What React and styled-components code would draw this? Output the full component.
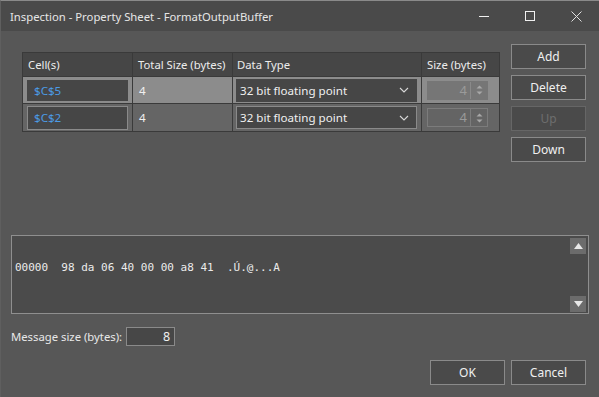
import React from 'react';
import styled, { createGlobalStyle } from 'styled-components';

const GlobalStyle = createGlobalStyle`
  html, body {
    margin: 0;
    padding: 0;
    background: #555555;
  }
  * {
    box-sizing: border-box;
  }
`;

const Window = styled.div`
  width: 599px;
  height: 397px;
  background: #575757;
  border-top: 1px solid #8a8a8a;
  border-left: 1px solid #5f5f5f;
  font-family: 'Segoe UI', 'Noto Sans', sans-serif;
  font-size: 11.3px;
  color: #e8e8e8;
  overflow: hidden;
`;

const TitleBar = styled.div`
  height: 30px;
  background: #4a4a4a;
  display: flex;
  align-items: center;
  padding-left: 9px;
`;

const Title = styled.div`
  flex: 1;
  color: #e6e6e6;
  white-space: nowrap;
`;

const Control = styled.div`
  width: 46px;
  height: 30px;
  display: flex;
  align-items: center;
  justify-content: center;
`;

const Body = styled.div`
  padding: 13px 10px 0 10px;
  display: flex;
  flex-direction: column;
`;

const TopRow = styled.div`
  display: flex;
  justify-content: space-between;
  height: 118px;
`;

const Table = styled.div`
  margin-top: 8px;
  margin-left: 11px;
  display: grid;
  grid-template-columns: 110px 100px 189px 78px;
  grid-template-rows: 24px 27px 28px;
  border-top: 1px solid #3a3a3a;
  border-left: 1px solid #3a3a3a;
  align-self: flex-start;
`;

const HeadCell = styled.div`
  background: #464646;
  border-right: 1px solid #3a3a3a;
  border-bottom: 1px solid #3a3a3a;
  padding-left: ${({ pad }) => pad || 5}px;
  display: flex;
  align-items: center;
  color: #ececec;
  white-space: nowrap;
`;

const Cell = styled.div`
  background: ${({ selected }) => (selected ? '#8c8c8c' : '#656565')};
  border-right: 1px solid #3a3a3a;
  border-bottom: 1px solid #3a3a3a;
  display: flex;
  align-items: center;
  padding: 0 ${({ padR }) => padR || 4}px 0 ${({ padL }) => padL || 4}px;
  color: #f0f0f0;
  font-size: 11.6px;
`;

const TextBox = styled.div`
  flex: 1;
  height: ${({ h }) => h || 21}px;
  background: #464646;
  border: 1px solid ${({ focused }) => (focused ? '#8a8a8a' : '#464646')};
  color: ${({ blue }) => (blue ? '#4b9be6' : '#f0f0f0')};
  display: flex;
  align-items: center;
  padding-left: 6px;
`;

const Select = styled(TextBox)`
  padding-left: 3px;
  padding-right: 7px;
  justify-content: space-between;
  height: 23px;
`;

const Spinner = styled.div`
  flex: 1;
  height: 19px;
  display: flex;
  background: ${({ selected }) => (selected ? '#767676' : '#646464')};
  border: 1px solid ${({ selected }) => (selected ? '#767676' : '#7c7c7c')};
`;

const SpinValue = styled.div`
  flex: 1;
  text-align: right;
  padding-right: 3px;
  color: #9a9a9a;
  font-size: 13px;
  line-height: 17px;
`;

const SpinButtons = styled.div`
  width: 17px;
  border-left: 1px solid ${({ selected }) => (selected ? '#8a8a8a' : '#7c7c7c')};
  display: flex;
  align-items: center;
  justify-content: center;
`;

const ButtonColumn = styled.div`
  display: flex;
  flex-direction: column;
  gap: 6px;
  margin-right: 3px;
`;

const Button = styled.div`
  width: 75px;
  height: 25px;
  background: #4a4a4a;
  border: 1px solid ${({ disabled }) => (disabled ? '#666666' : '#8a8a8a')};
  color: ${({ disabled }) => (disabled ? '#6e6e6e' : '#f0f0f0')};
  display: flex;
  align-items: center;
  justify-content: center;
  font-size: 12px;
`;

const HexBox = styled.div`
  margin-top: 73px;
  height: 79px;
  background: #4b4b4b;
  border: 1px solid #8f8f8f;
  display: flex;
`;

const HexText = styled.div`
  flex: 1;
  padding: 24px 0 0 3px;
  font-family: 'DejaVu Sans Mono', monospace;
  font-size: 11px;
  line-height: 16px;
  color: #ececec;
  white-space: pre;
`;

const ScrollColumn = styled.div`
  width: 20px;
  display: flex;
  flex-direction: column;
  justify-content: space-between;
  padding: 2px 2px 1px 2px;
`;

const ScrollButton = styled.div`
  width: 16px;
  height: 16px;
  background: #6c6c6c;
  display: flex;
  align-items: center;
  justify-content: center;
`;

const MessageRow = styled.div`
  margin-top: 13px;
  display: flex;
  align-items: center;
  gap: 4px;
  height: 19px;
`;

const SizeInput = styled.div`
  width: 49px;
  height: 19px;
  background: #474747;
  border: 1px solid #8a8a8a;
  text-align: right;
  padding-right: 4px;
  line-height: 17px;
  font-size: 12.5px;
  color: #f0f0f0;
`;

const Footer = styled.div`
  margin-top: 14px;
  display: flex;
  justify-content: flex-end;
  gap: 6px;
  margin-right: 3px;
`;

const Chevron = () => (
  <svg width="10" height="6" viewBox="0 0 10 6">
    <path d="M1 1 L5 5 L9 1" fill="none" stroke="#d8d8d8" strokeWidth="1.1" />
  </svg>
);

const SpinArrows = () => (
  <svg width="7" height="12" viewBox="0 0 7 12">
    <path d="M0.5 4.5 L3.5 1.5 L6.5 4.5 Z" fill="#a8a8a8" />
    <path d="M0.5 7.5 L3.5 10.5 L6.5 7.5 Z" fill="#a8a8a8" />
  </svg>
);

const rows = [
  { cell: '$C$5', total: '4', type: '32 bit floating point', size: '4', selected: true },
  { cell: '$C$2', total: '4', type: '32 bit floating point', size: '4', selected: false },
];

export default function App() {
  return (
    <Window>
      <GlobalStyle />
      <TitleBar>
        <Title>Inspection - Property Sheet - FormatOutputBuffer</Title>
        <Control>
          <svg width="10" height="10" viewBox="0 0 10 10">
            <path d="M0 5.5 H10" stroke="#f0f0f0" strokeWidth="1" />
          </svg>
        </Control>
        <Control>
          <svg width="10" height="10" viewBox="0 0 10 10">
            <rect x="0.5" y="0.5" width="9" height="9" fill="none" stroke="#f0f0f0" strokeWidth="1" />
          </svg>
        </Control>
        <Control>
          <svg width="11" height="11" viewBox="0 0 11 11">
            <path d="M0.5 0.5 L10.5 10.5 M10.5 0.5 L0.5 10.5" stroke="#e0e0e0" strokeWidth="1" />
          </svg>
        </Control>
      </TitleBar>
      <Body>
        <TopRow>
          <Table>
            <HeadCell>Cell(s)</HeadCell>
            <HeadCell>Total Size (bytes)</HeadCell>
            <HeadCell pad={4}>Data Type</HeadCell>
            <HeadCell>Size (bytes)</HeadCell>
            {rows.map((r, i) => (
              <React.Fragment key={i}>
                <Cell selected={r.selected}>
                  <TextBox blue focused={!r.selected} h={r.selected ? 21 : 24}>{r.cell}</TextBox>
                </Cell>
                <Cell selected={r.selected} padL={6}>{r.total}</Cell>
                <Cell selected={r.selected} padL={3} padR={4}>
                  <Select focused={!r.selected}>
                    <span>{r.type}</span>
                    <Chevron />
                  </Select>
                </Cell>
                <Cell selected={r.selected} padL={5} padR={11}>
                  <Spinner selected={r.selected}>
                    <SpinValue>{r.size}</SpinValue>
                    <SpinButtons selected={r.selected}>
                      <SpinArrows />
                    </SpinButtons>
                  </Spinner>
                </Cell>
              </React.Fragment>
            ))}
          </Table>
          <ButtonColumn>
            <Button>Add</Button>
            <Button>Delete</Button>
            <Button disabled>Up</Button>
            <Button>Down</Button>
          </ButtonColumn>
        </TopRow>
        <HexBox>
          <HexText>{'00000  98 da 06 40 00 00 a8 41  .Ú.@...A'}</HexText>
          <ScrollColumn>
            <ScrollButton>
              <svg width="9" height="6" viewBox="0 0 9 6">
                <path d="M0 6 L4.5 0 L9 6 Z" fill="#e8e8e8" />
              </svg>
            </ScrollButton>
            <ScrollButton>
              <svg width="9" height="6" viewBox="0 0 9 6">
                <path d="M0 0 L4.5 6 L9 0 Z" fill="#e8e8e8" />
              </svg>
            </ScrollButton>
          </ScrollColumn>
        </HexBox>
        <MessageRow>
          <span>Message size (bytes):</span>
          <SizeInput>8</SizeInput>
        </MessageRow>
        <Footer>
          <Button>OK</Button>
          <Button>Cancel</Button>
        </Footer>
      </Body>
    </Window>
  );
}
